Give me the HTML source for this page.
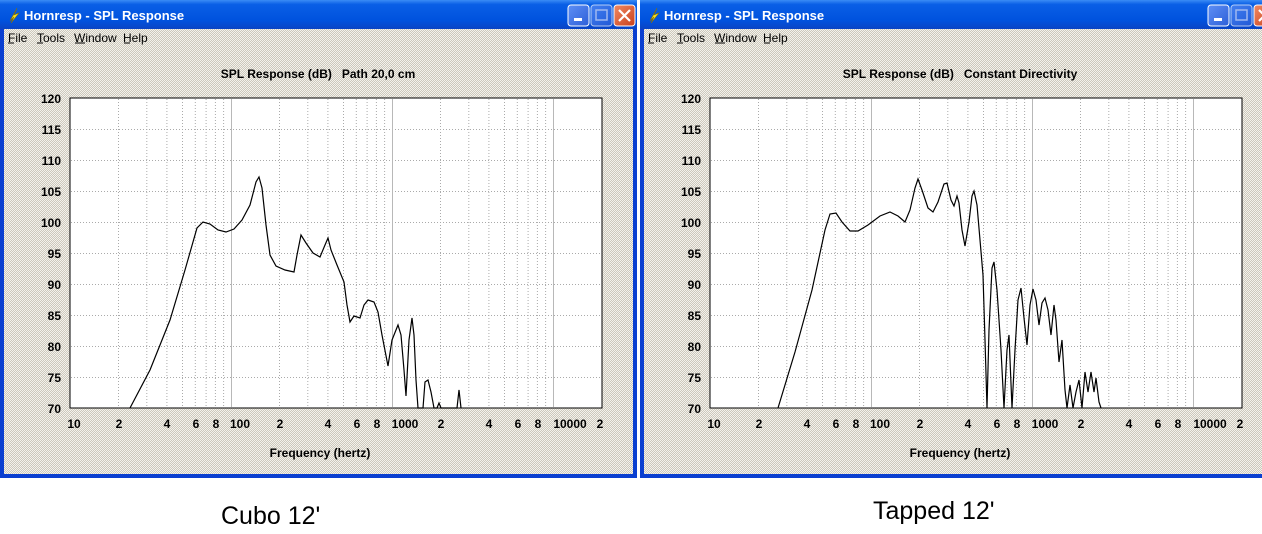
<!DOCTYPE html>
<html><head><meta charset="utf-8"><style>
html,body{margin:0;padding:0;background:#fff;width:1262px;height:534px;overflow:hidden}
svg{display:block}
text{font-family:"Liberation Sans",Arial,sans-serif}
.b{font-weight:bold;font-size:12px;fill:#000}
.m{font-size:12px;fill:#000}
.t{font-weight:bold;font-size:13px;fill:#fff}
</style></head><body>
<svg width="1262" height="534" viewBox="0 0 1262 534" xmlns="http://www.w3.org/2000/svg">
<defs>
<pattern id="dz" width="2" height="2" patternUnits="userSpaceOnUse">
<rect width="2" height="2" fill="#ccc8bc"/><rect width="1" height="1" fill="#f4f2ec"/><rect x="1" y="1" width="1" height="1" fill="#f4f2ec"/>
</pattern>
<linearGradient id="tb" x1="0" y1="0" x2="0" y2="1">
<stop offset="0" stop-color="#3a8cf5"/><stop offset="0.15" stop-color="#0a5fe6"/><stop offset="0.7" stop-color="#0052de"/><stop offset="1" stop-color="#0a44c4"/>
</linearGradient>
<linearGradient id="bb" x1="0" y1="0" x2="1" y2="1"><stop offset="0" stop-color="#5e8ff5"/><stop offset="1" stop-color="#2d5fd8"/></linearGradient>
<linearGradient id="rb" x1="0" y1="0" x2="1" y2="1"><stop offset="0" stop-color="#f08a64"/><stop offset="1" stop-color="#c8401c"/></linearGradient>
<g id="win">
<rect x="0" y="0" width="637" height="478" fill="#0a3fd0"/>
<rect x="0" y="0" width="637" height="29" fill="url(#tb)"/>
<rect x="4" y="29" width="629" height="445" fill="url(#dz)"/>
<path d="M10 21 L17 8 L14 15 L19 13 L11 23 L14 17 Z" fill="#f6e020" stroke="#8a7000" stroke-width="0.6"/>
<text x="24" y="20" class="t">Hornresp - SPL Response</text>
<text x="8" y="42" class="m">File</text><text x="37" y="42" class="m">Tools</text><text x="74" y="42" class="m">Window</text><text x="123" y="42" class="m">Help</text>
<path d="M8 43h6M37 43h6M75 43h10M124 43h6" stroke="#000" stroke-width="1"/>
<rect x="70" y="98" width="532" height="310" fill="#fff" stroke="#000" stroke-width="1"/>
<g stroke="#aaa" stroke-width="1" stroke-dasharray="1,2">
<path d="M71 129.5H601M71 160.5H601M71 191.5H601M71 222.5H601M71 253.5H601M71 284.5H601M71 315.5H601M71 346.5H601M71 377.5H601"/>
<path d="M118.5 99V407M146.8 99V407M166.9 99V407M182.5 99V407M195.3 99V407M206.1 99V407M215.4 99V407M223.6 99V407M279.5 99V407M307.8 99V407M327.9 99V407M343.5 99V407M356.3 99V407M367.1 99V407M376.4 99V407M384.6 99V407M440.5 99V407M468.8 99V407M488.9 99V407M504.5 99V407M517.3 99V407M528.1 99V407M537.4 99V407M545.6 99V407"/>
</g>
<path d="M231.5 99V407M392.5 99V407M553.5 99V407" stroke="#b8b8b8" stroke-width="1"/>
<g class="b" text-anchor="end">
<text x="61" y="103">120</text><text x="61" y="134">115</text><text x="61" y="165">110</text><text x="61" y="196">105</text><text x="61" y="227">100</text><text x="61" y="258">95</text><text x="61" y="289">90</text><text x="61" y="320">85</text><text x="61" y="351">80</text><text x="61" y="382">75</text><text x="61" y="413">70</text>
</g>
<g class="b" text-anchor="middle">
<text x="74" y="428">10</text><text x="119" y="428">2</text><text x="167" y="428">4</text><text x="196" y="428">6</text><text x="216" y="428">8</text><text x="240" y="428">100</text>
<text x="280" y="428">2</text><text x="328" y="428">4</text><text x="357" y="428">6</text><text x="377" y="428">8</text><text x="405" y="428">1000</text>
<text x="441" y="428">2</text><text x="489" y="428">4</text><text x="518" y="428">6</text><text x="538" y="428">8</text><text x="570" y="428">10000</text><text x="600" y="428">2</text>
<text x="320" y="457">Frequency (hertz)</text>
</g>
</g>
<g id="btns">
<rect x="0" y="0" width="21" height="21" rx="3" fill="url(#bb)" stroke="#fff" stroke-width="1"/>
<rect x="6" y="13" width="8" height="3" fill="#fff"/>
<rect x="23" y="0" width="21" height="21" rx="3" fill="url(#bb)" stroke="#fff" stroke-width="1" opacity="0.7"/>
<rect x="28" y="5" width="11" height="10" fill="none" stroke="#9fb8ef" stroke-width="1.5"/>
<rect x="46" y="0" width="21" height="21" rx="3" fill="url(#rb)" stroke="#fff" stroke-width="1"/>
<path d="M51 5L62 16M62 5L51 16" stroke="#fff" stroke-width="2.2"/>
</g>
</defs>
<rect width="1262" height="534" fill="#fff"/>
<use href="#win"/>
<use href="#win" x="640"/>
<use href="#btns" x="568" y="5"/>
<use href="#btns" x="1208" y="5"/>
<text x="318" y="78" class="b" text-anchor="middle">SPL Response (dB)&#160;&#160;&#160;Path 20,0 cm</text>
<text x="960" y="78" class="b" text-anchor="middle">SPL Response (dB)&#160;&#160;&#160;Constant Directivity</text>
<polyline fill="none" stroke="#000" stroke-width="1.2" points="130,408 150,370 170,320 185,270 197,228 203,222 210,224 218,230 226,232 234,229 242,220 250,205 256,182 259,177 262,188 266,225 270,255 276,266 285,270 294,272 297,255 301,235 306,243 313,253 320,257 325,245 328,238 331,250 337,265 344,282 347,305 350,322 354,316 360,318 364,305 368,300 374,302 378,312 382,335 388,366 392,340 398,325 401,335 404,370 406,396 409,340 412,318 414,335 416,380 418,408 423,408 425,382 428,380 431,392 434,408 437,408 439,403 441,408 457,408 459,390 461,408"/>
<polyline fill="none" stroke="#000" stroke-width="1.2" points="778,408 795,352 812,290 825,230 830,214 836,213 842,222 850,231 858,231 868,225 880,216 890,212 898,216 905,222 910,210 915,188 918,179 922,190 928,208 933,212 938,202 944,184 947,183 951,200 954,206 957,196 959,203 962,230 965,246 969,222 972,196 974,191 977,205 980,240 983,275 985,340 987,408 989,330 992,268 994,262 997,290 1001,350 1004,408 1007,350 1009,335 1012,408 1015,350 1018,300 1021,288 1024,318 1027,345 1030,305 1033,289 1036,300 1039,325 1042,303 1045,298 1048,310 1051,335 1054,305 1056,320 1059,362 1062,340 1065,390 1067,408 1070,385 1073,408 1076,392 1079,380 1082,408 1085,372 1088,392 1091,372 1094,392 1096,378 1099,402 1101,408"/>
<text x="221" y="524" font-size="25" fill="#000">Cubo 12'</text>
<text x="873" y="519" font-size="25" fill="#000">Tapped 12'</text>
</svg>
</body></html>
